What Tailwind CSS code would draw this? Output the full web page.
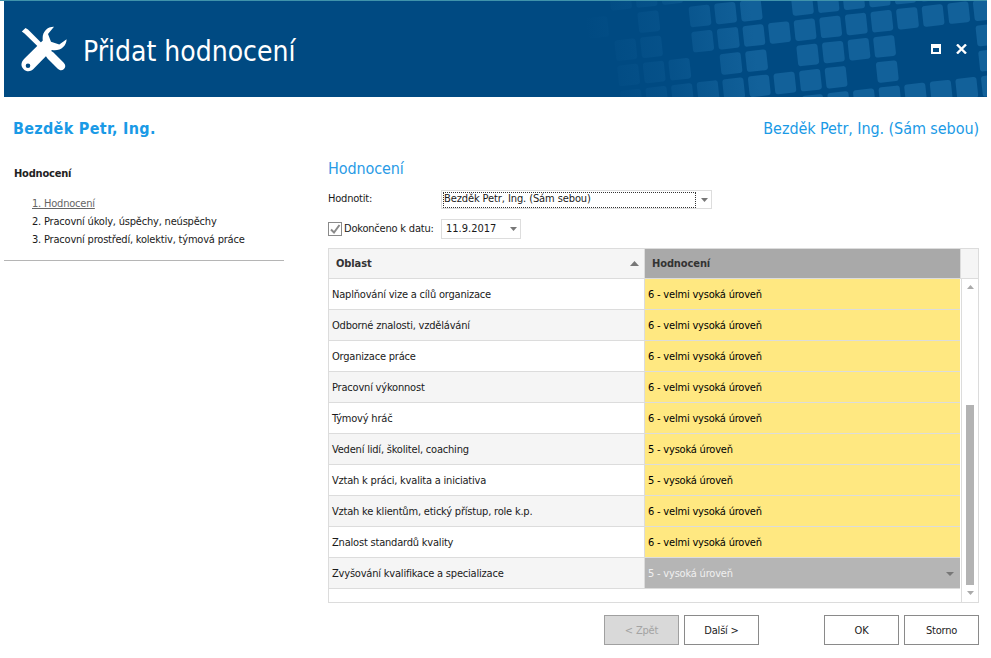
<!DOCTYPE html>
<html lang="cs">
<head>
<meta charset="utf-8">
<script src="https://cdn.jsdelivr.net/npm/@tailwindcss/browser@4"></script>
<title>Přidat hodnocení</title>
</head>
<body class="bg-white">
<div class="w-[991px] h-[658px] overflow-hidden bg-white flex flex-col font-['DejaVu_Sans_Condensed','DejaVu_Sans',sans-serif] text-[11px] leading-[16px] tracking-[-0.2px] text-[#1a1a1a]">
  <div class="w-[987px] h-px shrink-0 bg-[#3f93ab]"></div>
  <header class="relative ml-1 w-[983px] h-[96px] shrink-0 bg-[#004a82] overflow-hidden flex items-center">
    <svg class="absolute left-0 top-0" width="983" height="96" viewBox="4 1 983 96" aria-hidden="true">
      <defs>
        <linearGradient id="fade" gradientUnits="userSpaceOnUse" x1="-5.5" y1="0" x2="1" y2="0">
          <stop offset="0" stop-color="#12619a" stop-opacity="0"/>
          <stop offset="0.5" stop-color="#12619a" stop-opacity="0.35"/>
          <stop offset="1" stop-color="#12619a" stop-opacity="1"/>
        </linearGradient>
      </defs>
      <g transform="matrix(25.6 -2.85 2.7 25.2 728.3 38.3)" fill="url(#fade)">
        <rect x="-4.41" y="-2.41" width=".82" height=".82" rx=".12"/><rect x="-3.41" y="-2.41" width=".82" height=".82" rx=".12"/><rect x="-2.41" y="-2.41" width=".82" height=".82" rx=".12"/>
        <rect x="-5.41" y="-1.41" width=".82" height=".82" rx=".12"/><rect x="-3.41" y="-1.41" width=".82" height=".82" rx=".12"/><rect x="-1.41" y="-1.41" width=".82" height=".82" rx=".12"/><rect x="-.41" y="-1.41" width=".82" height=".82" rx=".12"/><rect x=".59" y="-1.41" width=".82" height=".82" rx=".12"/>
        <rect x="2.59" y="-1.41" width=".82" height=".82" rx=".12"/><rect x="3.59" y="-1.41" width=".82" height=".82" rx=".12"/><rect x="4.59" y="-1.41" width=".82" height=".82" rx=".12"/><rect x="5.59" y="-1.41" width=".82" height=".82" rx=".12"/><rect x="6.59" y="-1.41" width=".82" height=".82" rx=".12"/><rect x="7.59" y="-1.41" width=".82" height=".82" rx=".12"/><rect x="9.59" y="-1.41" width=".82" height=".82" rx=".12"/>
        <rect x="-4.41" y="-.41" width=".82" height=".82" rx=".12"/><rect x="-3.41" y="-.41" width=".82" height=".82" rx=".12"/><rect x="-1.41" y="-.41" width=".82" height=".82" rx=".12"/><rect x="-.41" y="-.41" width=".82" height=".82" rx=".12"/><rect x=".59" y="-.41" width=".82" height=".82" rx=".12"/><rect x="1.59" y="-.41" width=".82" height=".82" rx=".12"/><rect x="2.59" y="-.41" width=".82" height=".82" rx=".12"/><rect x="3.59" y="-.41" width=".82" height=".82" rx=".12"/><rect x="4.59" y="-.41" width=".82" height=".82" rx=".12"/><rect x="5.59" y="-.41" width=".82" height=".82" rx=".12"/><rect x="6.59" y="-.41" width=".82" height=".82" rx=".12"/><rect x="7.59" y="-.41" width=".82" height=".82" rx=".12"/><rect x="8.59" y="-.41" width=".82" height=".82" rx=".12"/><rect x="9.59" y="-.41" width=".82" height=".82" rx=".12"/>
        <rect x="-4.41" y=".59" width=".82" height=".82" rx=".12"/><rect x="-3.41" y=".59" width=".82" height=".82" rx=".12"/><rect x="-2.41" y=".59" width=".82" height=".82" rx=".12"/><rect x="-.41" y=".59" width=".82" height=".82" rx=".12"/><rect x=".59" y=".59" width=".82" height=".82" rx=".12"/><rect x="2.59" y=".59" width=".82" height=".82" rx=".12"/><rect x="3.59" y=".59" width=".82" height=".82" rx=".12"/><rect x="4.59" y=".59" width=".82" height=".82" rx=".12"/><rect x="5.59" y=".59" width=".82" height=".82" rx=".12"/><rect x="9.59" y=".59" width=".82" height=".82" rx=".12"/>
        <rect x="-4.41" y="1.59" width=".82" height=".82" rx=".12"/><rect x="-3.41" y="1.59" width=".82" height=".82" rx=".12"/><rect x="-2.41" y="1.59" width=".82" height=".82" rx=".12"/><rect x="-1.41" y="1.59" width=".82" height=".82" rx=".12"/><rect x="-.41" y="1.59" width=".82" height=".82" rx=".12"/><rect x=".59" y="1.59" width=".82" height=".82" rx=".12"/><rect x="1.59" y="1.59" width=".82" height=".82" rx=".12"/><rect x="2.59" y="1.59" width=".82" height=".82" rx=".12"/><rect x="3.59" y="1.59" width=".82" height=".82" rx=".12"/><rect x="5.59" y="1.59" width=".82" height=".82" rx=".12"/><rect x="9.59" y="1.59" width=".82" height=".82" rx=".12"/>
        <rect x="2.59" y="2.59" width=".82" height=".82" rx=".12"/><rect x="3.59" y="2.59" width=".82" height=".82" rx=".12"/><rect x="4.59" y="2.59" width=".82" height=".82" rx=".12"/><rect x="5.59" y="2.59" width=".82" height=".82" rx=".12"/><rect x="6.59" y="2.59" width=".82" height=".82" rx=".12"/><rect x="7.59" y="2.59" width=".82" height=".82" rx=".12"/><rect x="8.59" y="2.59" width=".82" height=".82" rx=".12"/><rect x="9.59" y="2.59" width=".82" height=".82" rx=".12"/>
      </g>
    </svg>
    <svg class="relative ml-[17px] shrink-0" width="46" height="46" viewBox="0 0 46 46" aria-hidden="true">
      <path fill="#fff" d="M.8 5.500 4.500 2 7 3.500 25.500 22 22 25.500 3.500 7.500Z"/>
      <path fill="#fff" d="M26.500 27.500 29.500 24.500 32.500 26.500 42.500 36.500C44.800 39 44.800 41 43 43C41 44.800 38.800 44.800 36.500 42.500L26.500 32.500 24.500 29.500Z"/>
      <path fill="#fff" fill-rule="evenodd" d="M33 .8C26 .6 20.600 6.500 21.800 14.500L4 32C-.4 36-.5 40 2.600 43.200C5.800 46.200 9.800 46.200 13.400 42L31 24C39.400 25.400 45.500 20 45.600 13.200L38.300 18.600 30 15.800 27 8ZM7 37.500A2.300 2.300 0 1 0 7 42.100 2.300 2.300 0 1 0 7 37.500Z"/>
    </svg>
    <h1 class="relative ml-[16px] mt-[6px] text-[28px] leading-[36px] tracking-normal font-normal text-white">Přidat hodnocení</h1>
    <div class="absolute right-[20px] top-[43px] flex items-center gap-[15px]">
      <svg width="10" height="10" viewBox="0 0 10 10" aria-hidden="true"><path fill="#fff" fill-rule="evenodd" d="M0 0H10V10H0ZM2 4V8H8V4Z"/></svg>
      <svg width="11" height="10" viewBox="0 0 11 10" aria-hidden="true"><path stroke="#fff" stroke-width="2.4" d="M1 .5 10 9.500M10 .5 1 9.500"/></svg>
    </div>
  </header>

  <div class="h-[62px] shrink-0 pl-[13px] pr-[12px] pt-[22px] flex justify-between items-start text-[16px] leading-[20px] tracking-normal text-[#1a9ae6]">
    <div class="font-bold tracking-[.3px]">Bezděk Petr, Ing.</div>
    <div class="tracking-[-0.07px]">Bezděk Petr, Ing. (Sám sebou)</div>
  </div>

  <div class="flex flex-1 min-h-0">
    <aside class="ml-1 w-[280px] h-[102px] shrink-0 border-b border-[#b5b5b5] pt-[7px]">
      <div class="pl-[10px] font-bold text-[#222]">Hodnocení</div>
      <ul class="mt-[14px] pl-[28px] flex flex-col gap-[2px]">
        <li class="underline text-[#666]">1. Hodnocení</li>
        <li>2. Pracovní úkoly, úspěchy, neúspěchy</li>
        <li>3. Pracovní prostředí, kolektiv, týmová práce</li>
      </ul>
    </aside>

    <main class="ml-[44px] w-[651px] flex flex-col">
      <h2 class="text-[16px] leading-[20px] tracking-[-0.1px] font-normal text-[#2a9be6]">Hodnocení</h2>
      <div class="mt-[11px] flex items-center h-[19px]">
        <span class="w-[113px] -mt-[1px]">Hodnotit:</span>
        <div class="w-[271px] h-[19px] border border-[#ddd] flex items-center pl-[1px] pr-[3px]">
          <div class="w-[253px] h-[16px] border border-dotted border-[#333] flex items-center pb-[2px] leading-[14px] tracking-[-0.1px]">Bezděk Petr, Ing. (Sám sebou)</div>
          <svg class="ml-auto" width="7" height="4" viewBox="0 0 7 4" aria-hidden="true"><path fill="#777" d="M0 0H7L3.500 4Z"/></svg>
        </div>
      </div>
      <div class="mt-[10px] flex items-center h-[20px]">
        <span class="w-[14px] h-[14px] border border-[#8a8a8a] flex items-center justify-center">
          <svg width="12" height="12" viewBox="0 0 12 12" aria-hidden="true"><path fill="none" stroke="#8a8a8a" stroke-width="2" d="M2 6.500 5 9.500 10.500 2"/></svg>
        </span>
        <span class="ml-[2px] w-[97px] whitespace-nowrap">Dokončeno k datu:</span>
        <div class="w-[80px] h-[20px] border border-[#ddd] flex items-center pl-[4px] pr-[3px]">
          <span class="tracking-normal">11.9.2017</span>
          <svg class="ml-auto" width="7" height="4" viewBox="0 0 7 4" aria-hidden="true"><path fill="#777" d="M0 0H7L3.500 4Z"/></svg>
        </div>
      </div>

      <div class="mt-[9px] w-[651px] h-[355px] border border-[#dcdcdc] flex flex-col relative">
        <div class="flex h-[30px] shrink-0 border-b border-[#dcdcdc] font-bold text-[#333] tracking-[-0.1px]">
          <div class="w-[316px] bg-[#f5f5f5] border-r border-[#dcdcdc] pl-[7px] flex items-center justify-between pr-[5px]">
            <span>Oblast</span>
            <svg width="9" height="5" viewBox="0 0 9 5" aria-hidden="true"><path fill="#777" d="M4.500 0 9 5H0Z"/></svg>
          </div>
          <div class="w-[315px] bg-[#a9a9a9] pl-[7px] flex items-center">Hodnocení</div>
          <div class="flex-1 bg-[#f5f5f5] border-l border-[#dcdcdc]"></div>
        </div>
        <div class="flex flex-1 min-h-0">
          <div class="w-[631px] shrink-0 flex flex-col">
            <div class="flex h-[31px] border-b border-[#dcdcdc]"><div class="w-[316px] bg-white border-r border-[#dcdcdc] pl-[3px] pt-[2px] flex items-center">Naplňování vize a cílů organizace</div><div class="flex-1 bg-[#ffe881] pl-[3px] pt-[2px] flex items-center text-black">6 - velmi vysoká úroveň</div></div>
            <div class="flex h-[31px] border-b border-[#dcdcdc]"><div class="w-[316px] bg-[#f5f5f5] border-r border-[#dcdcdc] pl-[3px] pt-[2px] flex items-center">Odborné znalosti, vzdělávání</div><div class="flex-1 bg-[#ffe881] pl-[3px] pt-[2px] flex items-center text-black">6 - velmi vysoká úroveň</div></div>
            <div class="flex h-[31px] border-b border-[#dcdcdc]"><div class="w-[316px] bg-white border-r border-[#dcdcdc] pl-[3px] pt-[2px] flex items-center">Organizace práce</div><div class="flex-1 bg-[#ffe881] pl-[3px] pt-[2px] flex items-center text-black">6 - velmi vysoká úroveň</div></div>
            <div class="flex h-[31px] border-b border-[#dcdcdc]"><div class="w-[316px] bg-[#f5f5f5] border-r border-[#dcdcdc] pl-[3px] pt-[2px] flex items-center">Pracovní výkonnost</div><div class="flex-1 bg-[#ffe881] pl-[3px] pt-[2px] flex items-center text-black">6 - velmi vysoká úroveň</div></div>
            <div class="flex h-[31px] border-b border-[#dcdcdc]"><div class="w-[316px] bg-white border-r border-[#dcdcdc] pl-[3px] pt-[2px] flex items-center">Týmový hráč</div><div class="flex-1 bg-[#ffe881] pl-[3px] pt-[2px] flex items-center text-black">6 - velmi vysoká úroveň</div></div>
            <div class="flex h-[31px] border-b border-[#dcdcdc]"><div class="w-[316px] bg-[#f5f5f5] border-r border-[#dcdcdc] pl-[3px] pt-[2px] flex items-center">Vedení lidí, školitel, coaching</div><div class="flex-1 bg-[#ffe881] pl-[3px] pt-[2px] flex items-center text-black">5 - vysoká úroveň</div></div>
            <div class="flex h-[31px] border-b border-[#dcdcdc]"><div class="w-[316px] bg-white border-r border-[#dcdcdc] pl-[3px] pt-[2px] flex items-center">Vztah k práci, kvalita a iniciativa</div><div class="flex-1 bg-[#ffe881] pl-[3px] pt-[2px] flex items-center text-black">5 - vysoká úroveň</div></div>
            <div class="flex h-[31px] border-b border-[#dcdcdc]"><div class="w-[316px] bg-[#f5f5f5] border-r border-[#dcdcdc] pl-[3px] pt-[2px] flex items-center">Vztah ke klientům, etický přístup, role k.p.</div><div class="flex-1 bg-[#ffe881] pl-[3px] pt-[2px] flex items-center text-black">6 - velmi vysoká úroveň</div></div>
            <div class="flex h-[31px] border-b border-[#dcdcdc]"><div class="w-[316px] bg-white border-r border-[#dcdcdc] pl-[3px] pt-[2px] flex items-center">Znalost standardů kvality</div><div class="flex-1 bg-[#ffe881] pl-[3px] pt-[2px] flex items-center text-black">6 - velmi vysoká úroveň</div></div>
            <div class="flex h-[31px] border-b border-[#dcdcdc]"><div class="w-[316px] bg-[#f5f5f5] border-r border-[#dcdcdc] pl-[3px] pt-[2px] flex items-center">Zvyšování kvalifikace a specializace</div><div class="flex-1 bg-[#b5b5b5] pl-[3px] pr-[6px] pt-[2px] flex items-center justify-between text-[#f0f0f0]"><span>5 - vysoká úroveň</span><svg width="8" height="4" viewBox="0 0 8 4" aria-hidden="true"><path fill="#777" d="M0 0H8L4 4Z"/></svg></div></div>
          </div>
          <div class="ml-[1px] flex-1 border-l border-[#dcdcdc] flex flex-col items-center relative">
            <svg class="mt-[6px]" width="7" height="4" viewBox="0 0 7 4" aria-hidden="true"><path fill="#aaa" d="M3.500 0 7 4H0Z"/></svg>
            <div class="mt-[116px] w-[8px] h-[180px] bg-[#b3b3b3]"></div>
            <svg class="mt-[6px]" width="7" height="4" viewBox="0 0 7 4" aria-hidden="true"><path fill="#aaa" d="M0 0H7L3.500 4Z"/></svg>
          </div>
        </div>
      </div>

      <div class="mt-[12px] flex">
        <button class="w-[75px] h-[30px] ml-[276px] pt-[2px] border border-[#a0a0a0] bg-[#d9d9d9] text-[#a3a3a3]">&lt; Zpět</button>
        <button class="w-[75px] h-[30px] ml-[5px] pt-[2px] border border-[#8a8a8a] bg-white text-[#222]">Další &gt;</button>
        <button class="w-[75px] h-[30px] ml-[65px] pt-[2px] border border-[#8a8a8a] bg-white text-[#222]">OK</button>
        <button class="w-[75px] h-[30px] ml-[5px] pt-[2px] border border-[#8a8a8a] bg-white text-[#222]">Storno</button>
      </div>
    </main>
  </div>
</div>
</body>
</html>
